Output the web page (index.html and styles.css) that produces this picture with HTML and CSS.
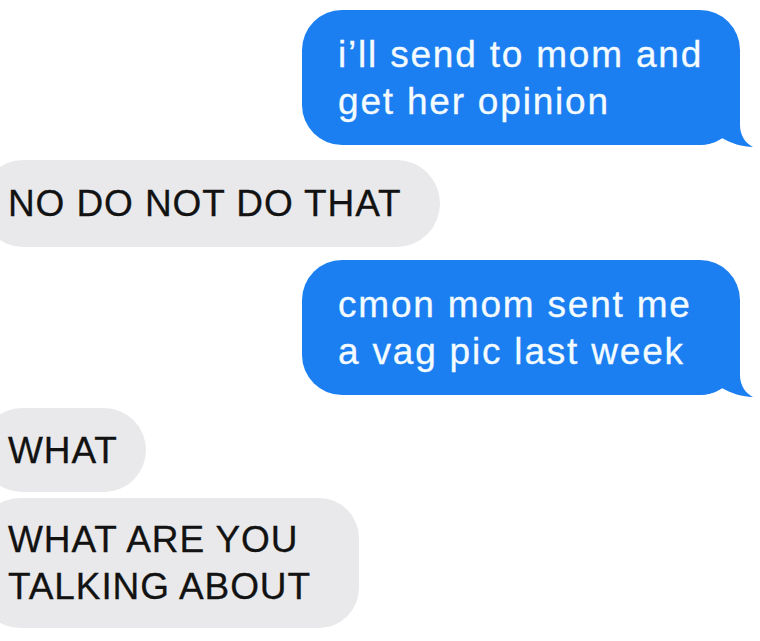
FILE: index.html
```html
<!DOCTYPE html>
<html lang="en">
<head>
<meta charset="utf-8">
<title>Messages</title>
<link rel="stylesheet" href="styles.css">
</head>
<body>
<div class="thread">
  <div class="msg out first">
    <p class="text">i’ll send to mom and<br>get her opinion</p>
    <svg class="tail" width="56" height="50" viewBox="0 0 56 50"><path d="M0 5 L40 5 L40 25 C40 35 45 43 53 47 C43 47 30 43 22 38 C16 42 8 45 0 45 Z"/></svg>
  </div>
  <div class="msg in">
    <p class="text">NO DO NOT DO THAT</p>
  </div>
  <div class="msg out">
    <p class="text">cmon mom sent me<br>a vag pic last week</p>
    <svg class="tail" width="56" height="50" viewBox="0 0 56 50"><path d="M0 5 L40 5 L40 25 C40 35 45 43 53 47 C43 47 30 43 22 38 C16 42 8 45 0 45 Z"/></svg>
  </div>
  <div class="msg in short">
    <p class="text">WHAT</p>
  </div>
  <div class="msg in follow">
    <p class="text">WHAT ARE YOU<br>TALKING ABOUT</p>
  </div>
</div>
</body>
</html>
```
FILE: styles.css
```css
html, body {
  margin: 0;
  padding: 0;
  background: #ffffff;
  overflow: hidden;
}
body {
  width: 760px;
  height: 641px;
  font-family: "Liberation Sans", Arial, sans-serif;
}
.thread {
  display: flex;
  flex-direction: column;
  gap: 13px;
  padding-top: 10px;
}
.msg {
  position: relative;
  box-sizing: border-box;
  border-radius: 42px;
}
.text {
  margin: 0;
  font-size: 37px;
  line-height: 47px;
  white-space: nowrap;
}
.out {
  align-self: flex-end;
  margin-right: 20px;
  width: 438px;
  padding: 20.5px 30px 20.5px 36px;
  background: #1b7ff1;
  border-radius: 40px;
}
.out .text {
  color: #f3fbff;
  letter-spacing: 1.8px;
  -webkit-text-stroke: 0.3px #f3fbff;
}
.first {
  margin-bottom: 2px;
}
.in {
  align-self: flex-start;
  margin-left: -20px;
  padding: 20px 38px 20px 28px;
  background: #e9e9eb;
  border-radius: 44px;
}
.in .text {
  color: #121212;
  letter-spacing: 0.9px;
  -webkit-text-stroke: 0.3px #121212;
}
.short {
  padding-top: 18.5px;
  padding-bottom: 18.5px;
  padding-right: 28px;
}
.follow {
  margin-top: -7px;
  padding-top: 18px;
  padding-bottom: 18px;
  padding-right: 48px;
  border-radius: 40px;
}
.tail {
  position: absolute;
  right: -16px;
  bottom: -5px;
  fill: #1b7ff1;
}
```
